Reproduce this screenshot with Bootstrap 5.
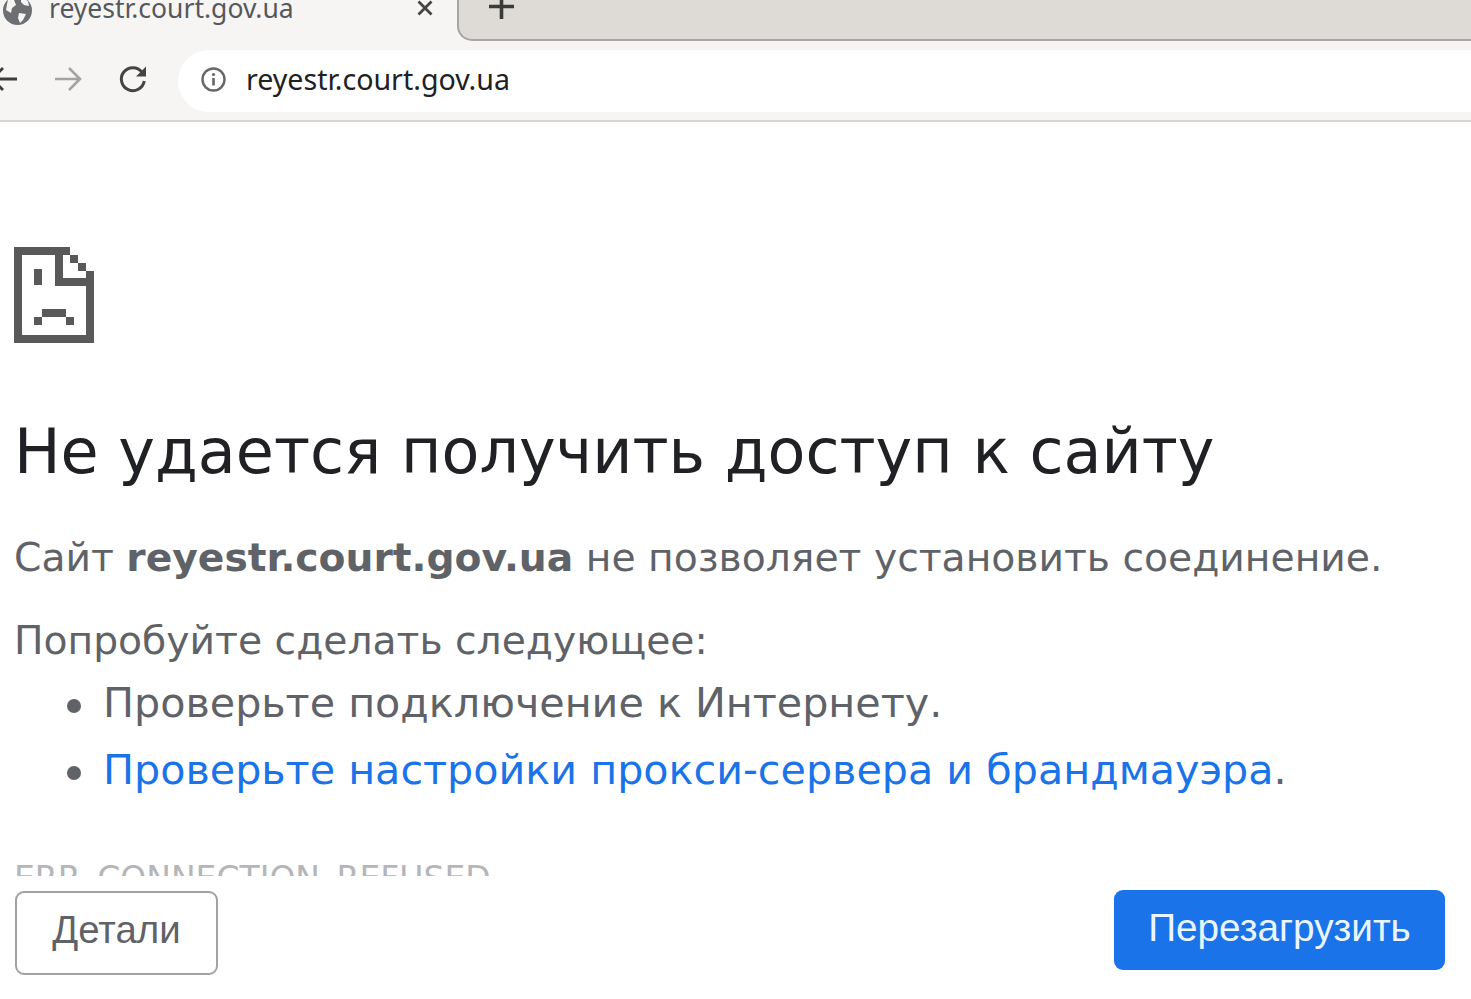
<!doctype html>
<html lang="ru">
<head>
<meta charset="utf-8">
<title>reyestr.court.gov.ua</title>
<link href="https://cdn.jsdelivr.net/npm/bootstrap@5.3.0/dist/css/bootstrap.min.css" rel="stylesheet">
<style>
html,body{height:999px;overflow:hidden;background:#fff}
body{font-family:"DejaVu Sans",sans-serif;color:#5f6368}
.chrome-top{background:#f6f5f4;border-bottom:2px solid #d8d6d3;height:122px}
.tab-strip{height:41px;overflow:hidden}
.tab-on{width:457px;height:41px;padding:0 24px 16px 3px;gap:17px;flex:none}
.tab-title{font:26.5px/40px "Noto Sans",sans-serif;color:#55585c;flex:1;margin-bottom:-3px}
.tab-close{margin-bottom:9px}
.tab-rest{background:#dedbd7;border-left:2px solid #a8a6a3;border-bottom:2px solid #a8a6a3;border-bottom-left-radius:15px;padding:0 0 20px 30px}
.tool-row{height:79px;padding-top:9px;overflow:hidden}
.nav-glyphs{width:188px;height:58px;flex:none;margin-left:-10px;gap:36px}
.omni{background:#fff;height:62px;border-radius:31px 0 0 31px;padding-left:23px;gap:20px}
.omni-text{font:28.6px/40px "Noto Sans",sans-serif;color:#202124;margin-top:-5px}
.omni-info{margin-top:-3px}
.page-body{padding:125px 0 0 14px;height:766px;overflow:hidden}
.sad-page{display:block}
.err-title{font:400 61.95px/72px "DejaVu Sans",sans-serif;color:#202124;margin:73px 0 0;white-space:nowrap}
.err-line{font-size:39.25px;line-height:46px;margin:47px 0 0;white-space:nowrap}
.err-try{margin-top:37px}
.err-list{font-size:41.25px;line-height:46px;margin:16px 0 0;padding-left:89px;white-space:nowrap;list-style:none}
.err-list li::before{content:"";display:inline-block;width:14px;height:14px;border-radius:50%;background:#5f6368;margin-left:-36px;margin-right:22px;vertical-align:middle}
.err-list li+li{margin-top:21px}
.err-list a{color:#1a73e8;text-decoration:none}
.err-code{font-size:33px;line-height:40px;color:#b4b6b9;height:17px;overflow:hidden;margin-top:66px;white-space:nowrap}
.foot-bar{padding:0 26px 0 15px;height:111px}
.btn-details{width:203px;height:84px;font:38.4px "Liberation Sans",sans-serif;color:#5f6368;border:2px solid #a2a2a2;border-radius:9px;background:#fff;margin-top:3px;padding:0 0 6px}
.btn-reload{width:331px;height:80px;font:38.7px "Liberation Sans",sans-serif;background:#1a73e8;color:#eaf6ff;border:0;border-radius:9px;margin-top:2px;padding:0 0 4px}
</style>
</head>
<body>
<div class="chrome-top">
  <div class="tab-strip d-flex">
    <div class="tab-on d-flex align-items-end">
      <svg width="29" height="29" viewBox="0 0 29 29" class="flex-none"><circle cx="14.5" cy="14.5" r="14.5" fill="#6d6f72"/><path d="M5 3l6 1 2 5-4 3-1 5-5-3zM18 1l7 4 1 5-5-1-3-3zM16 17l7 1-3 6-3 3-2-5z" fill="#f6f5f4"/></svg>
      <div class="tab-title">reyestr.court.gov.ua</div>
      <svg class="tab-close" width="16" height="16" viewBox="0 0 16 16"><path d="M1.5 1.5l13 13M14.5 1.5l-13 13" stroke="#444" stroke-width="2.8" fill="none"/></svg>
    </div>
    <div class="tab-rest flex-grow-1 d-flex align-items-end">
      <svg width="25" height="25" viewBox="0 0 25 25"><path d="M12.5 0v25M0 12.5h25" stroke="#3a3a3a" stroke-width="3.6" fill="none"/></svg>
    </div>
  </div>
  <div class="tool-row d-flex">
    <div class="nav-glyphs d-flex align-items-center">
      <svg width="28" height="26" viewBox="0 0 28 26"><path d="M27 13H2M13 2L2 13l11 11" stroke="#3c3c3c" stroke-width="2.8" fill="none"/></svg>
      <svg width="28" height="26" viewBox="0 0 28 26"><path d="M1 13h25M15 2l11 11-11 11" stroke="#a3a3a3" stroke-width="2.6" fill="none"/></svg>
      <svg width="30" height="30" viewBox="0 0 30 30"><path d="M24 8.2A11.5 11.5 0 1 0 26.2 17" stroke="#444" stroke-width="3" fill="none"/><path d="M28 2.5v10H18z" fill="#444"/></svg>
    </div>
    <div class="omni flex-grow-1 d-flex align-items-center">
      <svg class="omni-info" width="25" height="25" viewBox="0 0 25 25"><circle cx="12.5" cy="12.5" r="11" stroke="#666" stroke-width="2.4" fill="none"/><path d="M12.5 11v7.5" stroke="#666" stroke-width="2.6"/><circle cx="12.5" cy="7.5" r="1.6" fill="#666"/></svg>
      <div class="omni-text">reyestr.court.gov.ua</div>
    </div>
  </div>
</div>
<div class="page-body">
  <svg class="sad-page" width="80" height="96" viewBox="0 0 80 96" fill="#595959"><rect width="8" height="96"/><rect width="56" height="8"/><rect y="88" width="80" height="8"/><rect x="72" y="24" width="8" height="72"/><rect x="41" width="8" height="39"/><rect x="41" y="31" width="39" height="8"/><rect x="56" y="8" width="8" height="8"/><rect x="64" y="16" width="8" height="8"/><rect x="20" y="22" width="8" height="16"/><rect x="28" y="62" width="24" height="8"/><rect x="20" y="70" width="8" height="8"/><rect x="52" y="70" width="8" height="8"/></svg>
  <h1 class="err-title">Не удается получить доступ к сайту</h1>
  <p class="err-line">Сайт <b>reyestr.court.gov.ua</b> не позволяет установить соединение.</p>
  <p class="err-line err-try">Попробуйте сделать следующее:</p>
  <ul class="err-list">
    <li>Проверьте подключение к Интернету.</li>
    <li><a href="#">Проверьте настройки прокси-сервера и брандмауэра</a>.</li>
  </ul>
  <div class="err-code">ERR_CONNECTION_REFUSED</div>
</div>
<div class="foot-bar d-flex justify-content-between align-items-start">
  <button class="btn btn-details" type="button">Детали</button>
  <button class="btn btn-reload" type="button">Перезагрузить</button>
</div>
<script src="https://cdn.jsdelivr.net/npm/bootstrap@5.3.0/dist/js/bootstrap.bundle.min.js"></script>
</body>
</html>
